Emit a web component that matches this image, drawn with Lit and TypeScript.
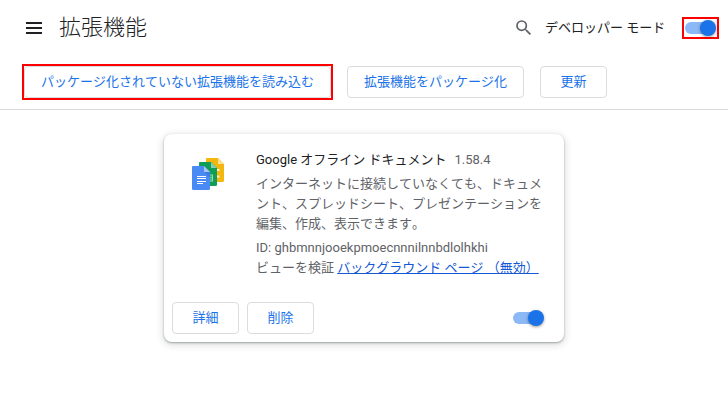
import { LitElement, html, css } from "lit";
import { customElement, property } from "lit/decorators.js";

@customElement("toggle-switch")
class ToggleSwitch extends LitElement {
  static styles = css`
    :host { display: block; position: relative; width: 31px; height: 16px; flex: none; }
    .bar { position: absolute; left: 0; top: 2px; width: 28px; height: 12px; border-radius: 6px; background: #8cb8f5; }
    .knob { position: absolute; right: 0; top: 0; width: 16px; height: 16px; border-radius: 50%; background: #1a73e8; box-shadow: 0 1px 3px rgba(0, 0, 0, 0.4); }
  `;
  render() {
    return html`<div class="bar"></div><div class="knob"></div>`;
  }
}

@customElement("outline-button")
class OutlineButton extends LitElement {
  @property() label = "";
  static styles = css`
    :host { display: block; flex: none; }
    .btn {
      box-sizing: border-box; display: flex; align-items: center; justify-content: center;
      height: 32px; min-width: 67px; padding: 0 16px; border: 1px solid #dadce0; border-radius: 4px;
      background: #fff; color: #1a73e8; font: inherit; white-space: nowrap;
    }
  `;
  render() {
    return html`<button class="btn">${this.label}</button>`;
  }
}

@customElement("app-root")
class AppRoot extends LitElement {
  static styles = css`
    :host {
      display: block; height: 400px; overflow: hidden; background: #fff; color: #202124;
      font: 400 13px/20px Roboto, "Noto Sans CJK JP", sans-serif; font-kerning: none;
    }
    .header { display: flex; align-items: center; height: 56px; box-sizing: border-box; padding: 0 9px 0 26px; }
    .menu { width: 16px; height: 12px; flex: none; }
    .title { margin: 0 0 0 17px; flex: 1; font-size: 22px; font-weight: 300; line-height: 32px; padding-bottom: 1px; }
    .search { width: 24px; height: 24px; flex: none; margin-right: 9px; }
    .mode { width: 137px; white-space: nowrap; }
    .mark { border: 2px solid #f00; box-sizing: border-box; }
    .mark-toggle { width: 37px; height: 22px; padding: 1px; }
    .toolbar { display: flex; align-items: center; height: 54px; box-sizing: border-box; padding: 0 22px 2px; border-bottom: 1px solid #dadce0; }
    .mark-load { height: 36px; margin-right: 14px; }
    .toolbar outline-button + outline-button { margin-left: 16px; }
    .card {
      width: 400px; height: 208px; margin: 24px 0 0 164px; border-radius: 8px; background: #fff;
      display: flex; flex-direction: column;
      box-shadow: 0 1px 2px rgba(60, 64, 67, 0.4), 0 2px 6px 2px rgba(60, 64, 67, 0.15);
    }
    .main { display: flex; flex: 1; padding: 16px 20px 0 24px; }
    .logo { width: 40px; height: 40px; flex: none; margin: 4px 28px 0 0; }
    .info { width: 288px; color: #5f6368; white-space: nowrap; }
    .name { color: #202124; }
    .version { margin-left: 8px; }
    .desc { margin: 4px 0; }
    .link { color: #1558d6; text-decoration: underline; text-decoration-skip-ink: none; text-decoration-thickness: 1px; text-underline-offset: 1px; }
    .footer { display: flex; align-items: center; gap: 8px; padding: 0 20px 8px 8px; }
    .grow { flex: 1; }
  `;
  render() {
    return html`
      <div class="header">
        <svg class="menu" viewBox="0 0 16 12"><path d="M0 0h16v2H0zM0 5h16v2H0zM0 10h16v2H0z" fill="#202124" /></svg>
        <h1 class="title">拡張機能</h1>
        <svg class="search" viewBox="0 0 24 24"><path fill="#5f6368" transform="translate(1.6 1.6) scale(.85)" d="M15.5 14h-.79l-.28-.27A6.471 6.471 0 0 0 16 9.5 6.5 6.5 0 1 0 9.5 16c1.61 0 3.09-.59 4.23-1.57l.27.28v.79l5 4.99L20.49 19l-4.99-5zm-6 0C7.01 14 5 11.99 5 9.5S7.01 5 9.5 5 14 7.01 14 9.5 11.99 14 9.5 14z" /></svg>
        <span class="mode">デベロッパー モード</span>
        <div class="mark mark-toggle"><toggle-switch></toggle-switch></div>
      </div>
      <div class="toolbar">
        <div class="mark mark-load"><outline-button label="パッケージ化されていない拡張機能を読み込む"></outline-button></div>
        <outline-button label="拡張機能をパッケージ化"></outline-button>
        <outline-button label="更新"></outline-button>
      </div>
      <div class="card">
        <div class="main">
          <svg class="logo" viewBox="0 0 40 40">
            <path d="M19 4H30l6 6V26.500a1.500 1.500 0 0 1-1.500 1.500H19.500A1.500 1.500 0 0 1 18 26.500V5a1 1 0 0 1 1-1z" fill="#f4b70f" />
            <path d="M30 4l6 6h-6z" fill="#fbe093" />
            <path d="M29 15h2.500v2H29zM29 21.500h2.500v2H29z" fill="#fff3c9" />
            <path d="M12 8H23l6 6V30.500a1.500 1.500 0 0 1-1.500 1.500H12.500A1.500 1.500 0 0 1 11 30.500V9a1 1 0 0 1 1-1z" fill="#109d58" />
            <path d="M23 8l6 6h-6z" fill="#87ceac" />
            <path d="M19 20.500h6v7h-6zM20 21.500v1.300h4v-1.300zM20 23.700v1h4v-1zM20 25.600v1h4v-1z" fill="#9fd8bb" fill-rule="evenodd" />
            <path d="M5 12H16l6 6V34.500a1.500 1.500 0 0 1-1.500 1.500H5.500A1.500 1.500 0 0 1 4 34.500V13a1 1 0 0 1 1-1z" fill="#4a8af4" />
            <path d="M16 12l6 6h-6z" fill="#a6c5fa" />
            <path d="M16 18h6v6z" fill="#3f7de6" />
            <path d="M9 22h9v1H9zM9 24h9v1H9zM9 27h9v1H9zM9 29h6v1H9z" fill="#fff" />
          </svg>
          <div class="info">
            <div><span class="name">Google オフライン ドキュメント</span><span class="version">1.58.4</span></div>
            <div class="desc">インターネットに接続していなくても、ドキュメ<br />ント、スプレッドシート、プレゼンテーションを<br />編集、作成、表示できます。</div>
            <div>ID: ghbmnnjooekpmoecnnnilnnbdlolhkhi</div>
            <div>ビューを検証 <span class="link">バックグラウンド ページ （無効）</span></div>
          </div>
        </div>
        <div class="footer">
          <outline-button label="詳細"></outline-button>
          <outline-button label="削除"></outline-button>
          <div class="grow"></div>
          <toggle-switch></toggle-switch>
        </div>
      </div>
    `;
  }
}
